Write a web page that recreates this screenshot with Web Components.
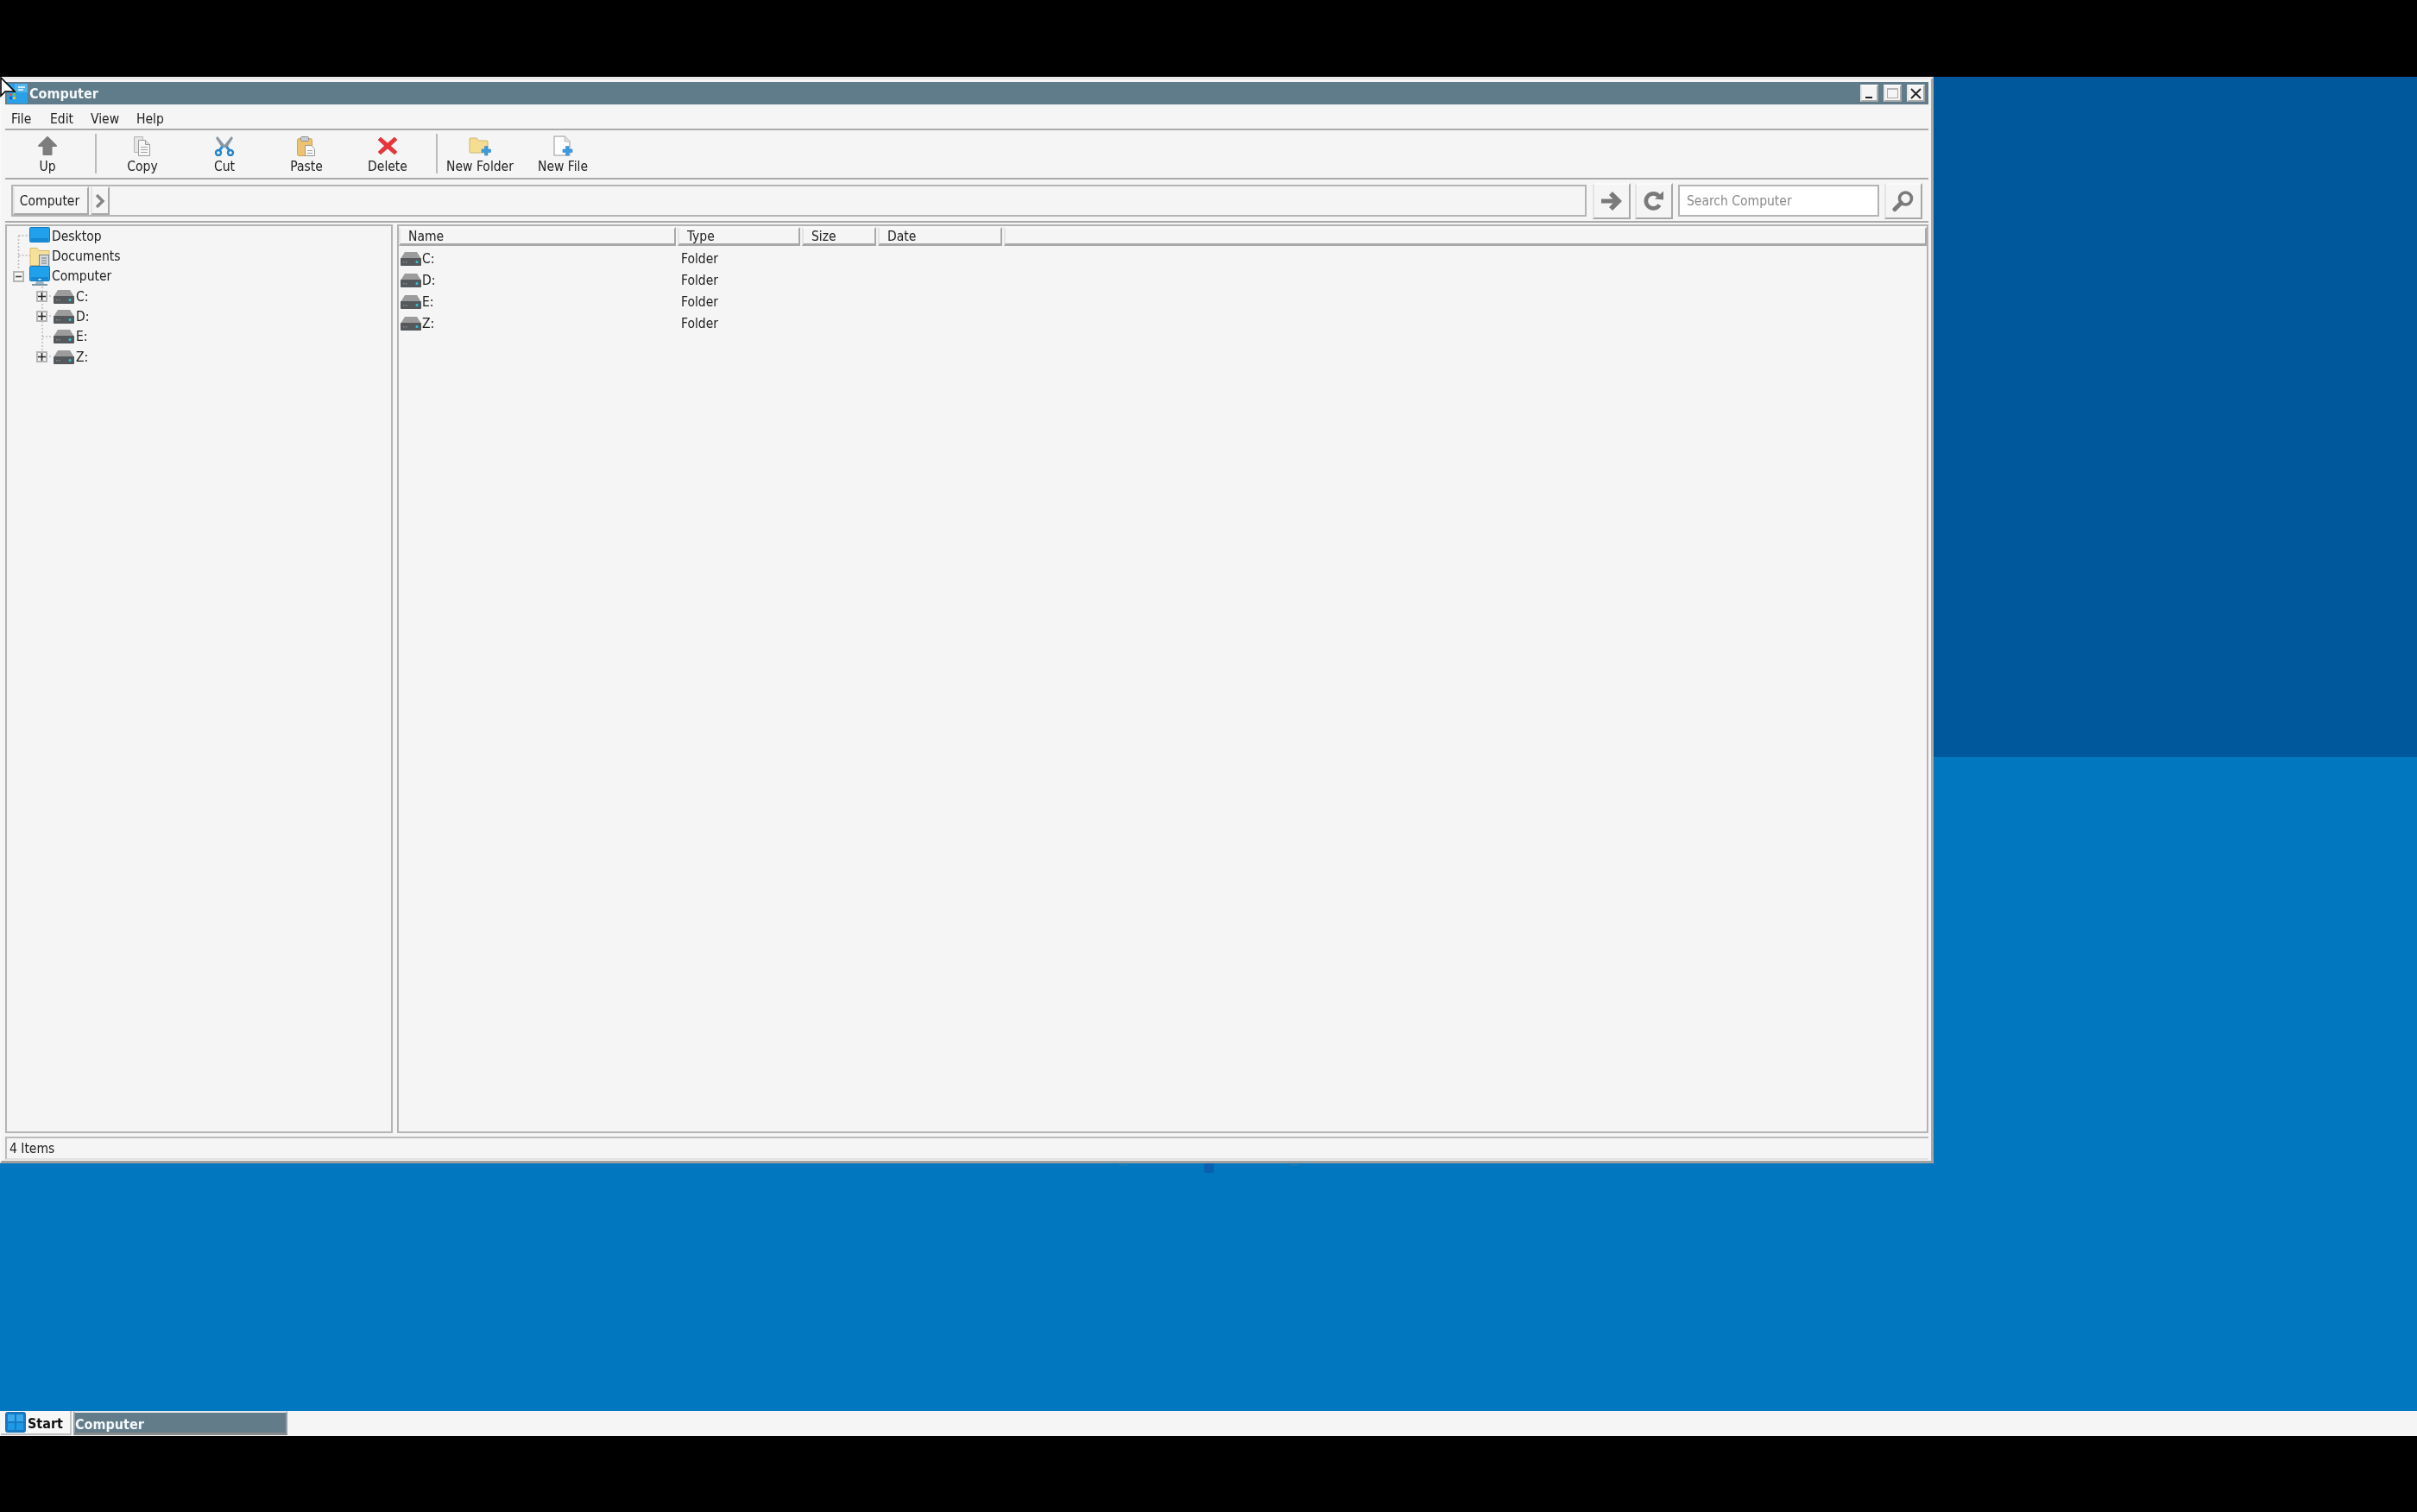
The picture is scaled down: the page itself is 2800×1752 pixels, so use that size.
<!DOCTYPE html>
<html>
<head>
<meta charset="utf-8">
<title>Computer</title>
<style>
  html, body { margin: 0; padding: 0; background: #000; }
  body { width: 2800px; height: 1752px; overflow: hidden; font-family: "DejaVu Sans", "Liberation Sans", sans-serif; font-stretch: condensed; font-size: 15.5px; color: #111; }
</style>
</head>
<body>
<x-screen>
  <x-window title="Computer">
    <x-menubar>
      <x-menu-item w="45">File</x-menu-item>
      <x-menu-item w="47">Edit</x-menu-item>
      <x-menu-item w="53">View</x-menu-item>
      <x-menu-item w="60">Help</x-menu-item>
    </x-menubar>
    <x-toolbar>
      <x-tool-button icon="up" w="98">Up</x-tool-button>
      <x-tool-sep style="margin-right:3px"></x-tool-sep>
      <x-tool-button icon="copy" w="100">Copy</x-tool-button>
      <x-tool-button icon="cut" w="90">Cut</x-tool-button>
      <x-tool-button icon="paste" w="100">Paste</x-tool-button>
      <x-tool-button icon="delete" w="88">Delete</x-tool-button>
      <x-tool-sep style="margin-left:12px"></x-tool-sep>
      <x-tool-button icon="newfolder" w="86">New Folder</x-tool-button>
      <x-tool-button icon="newfile" w="106">New File</x-tool-button>
    </x-toolbar>
    <x-addressbar path="Computer" placeholder="Search Computer"></x-addressbar>
    <x-panes>
      <x-tree slot="tree">
        <x-tree-item icon="desktop">Desktop</x-tree-item>
        <x-tree-item icon="documents">Documents</x-tree-item>
        <x-tree-item icon="computer" toggle="minus">Computer</x-tree-item>
        <x-tree-item icon="drive" depth="1" toggle="plus">C:</x-tree-item>
        <x-tree-item icon="drive" depth="1" toggle="plus">D:</x-tree-item>
        <x-tree-item icon="drive" depth="1">E:</x-tree-item>
        <x-tree-item icon="drive" depth="1" toggle="plus">Z:</x-tree-item>
      </x-tree>
      <x-file-list slot="list">
        <x-file-row name="C:" type="Folder"></x-file-row>
        <x-file-row name="D:" type="Folder"></x-file-row>
        <x-file-row name="E:" type="Folder"></x-file-row>
        <x-file-row name="Z:" type="Folder"></x-file-row>
      </x-file-list>
    </x-panes>
    <x-statusbar>4 Items</x-statusbar>
  </x-window>
  <x-taskbar slot="taskbar" task="Computer"></x-taskbar>
</x-screen>

<script>
const ICONS = {
  up: '<svg viewBox="0 0 24 24" width="24" height="24"><path d="M12 2 L22 12 L16.500 12 L16.500 22 L7.500 22 L7.500 12 L2 12 Z" fill="#7d7d7d" stroke="#7d7d7d" stroke-width="2" stroke-linejoin="round"/></svg>',
  copy: '<svg viewBox="0 0 24 24" width="24" height="24"><path d="M2.500 1.500h10l0 18h-10z" fill="#e6e6e6" stroke="#b5b5b5"/><path d="M7.500 5.500h8l5 5v13h-13z" fill="#f7f7f7" stroke="#9a9a9a"/><path d="M15.500 5.500v5h5" fill="#ddd" stroke="#9a9a9a"/><path d="M10 13.500h8M10 16.500h8M10 19.500h8" stroke="#a5a5a5"/></svg>',
  cut: '<svg viewBox="0 0 24 24" width="24" height="24"><path d="M4 1 L12 11 L20 1 L22 3 L15 14 L9 14 L2 3 Z" fill="#8a97a3"/><path d="M9.500 13 L6.500 17M14.500 13 L17.500 17" stroke="#2b8fd6" stroke-width="3"/><circle cx="5" cy="20" r="3" fill="none" stroke="#2384cc" stroke-width="2.400"/><circle cx="19" cy="20" r="3" fill="none" stroke="#2384cc" stroke-width="2.400"/></svg>',
  paste: '<svg viewBox="0 0 24 24" width="24" height="24"><rect x="1.500" y="3.500" width="17" height="20" rx="2" fill="#eec36f" stroke="#d2a24f"/><rect x="5.500" y="1.500" width="9" height="5" rx="1" fill="#c9ccd0" stroke="#8e9297"/><path d="M10.500 11.500h7l4 4v8h-11z" fill="#f8f8f8" stroke="#999"/><path d="M13 17.500h6M13 20.500h6" stroke="#a5a5a5"/></svg>',
  delete: '<svg viewBox="0 0 24 24" width="24" height="24"><path d="M4 2 L12 9 L20 2 L23 5 L15.500 12 L23 19 L20 22 L12 15 L4 22 L1 19 L8.500 12 L1 5 Z" fill="#e8343a" stroke="#c82a2f" stroke-width=".6"/></svg>',
  newfolder: '<svg viewBox="0 0 26 24" width="26" height="24"><path d="M1 4a1 1 0 0 1 1-1h7l2.500 3H21a1 1 0 0 1 1 1v12a1 1 0 0 1-1 1H2a1 1 0 0 1-1-1z" fill="#f5de91" stroke="#cdb56b"/><path d="M15 16h3.500v-3.500h3.500V16H25.500v3.500H22V23h-3.500v-3.500H15z" fill="#3b9be0" stroke="#2d86c7" stroke-width=".6"/></svg>',
  newfile: '<svg viewBox="0 0 24 24" width="24" height="24"><path d="M2 1h12l6 6v16H2z" fill="#fff" stroke="#b8b8b8" stroke-width="1.500"/><path d="M14 1v6h6" fill="#e4e4e4" stroke="#b8b8b8"/><path d="M12 16h3.500v-3.500h3.500V16h4v3.500h-4V23h-3.500v-3.500H12z" fill="#3b9be0" stroke="#2d86c7" stroke-width=".6"/></svg>',
  desktop: '<svg viewBox="0 0 24 24" width="24" height="24"><rect x=".5" y="1.500" width="23" height="17" rx="1" fill="#21a0ec" stroke="#1478bd"/><rect x="2" y="14" width="20" height="3.500" fill="#1688d3"/></svg>',
  documents: '<svg viewBox="0 0 24 24" width="24" height="24"><path d="M1 2.500h8l2 3h12v17H1z" fill="#f6e19b" stroke="#d8b96a"/><rect x="11.500" y="10.500" width="11" height="13" fill="#d5dade" stroke="#7b858d"/><path d="M14 14h6M14 17h6M14 20h6" stroke="#6e7880"/></svg>',
  computer: '<svg viewBox="0 0 24 24" width="24" height="24"><rect x=".5" y=".5" width="23" height="17" rx="1" fill="#21a0ec" stroke="#1478bd"/><rect x="2" y="13" width="20" height="3.500" fill="#1688d3"/><rect x="10.500" y="15" width="3" height="1.500" fill="#e8f4fb"/><path d="M8 18h8l1 3H7z" fill="#9eb6c4"/><rect x="3" y="21" width="18" height="2" fill="#7d97a6"/></svg>',
  drive: '<svg viewBox="0 0 24 16" width="24" height="16"><path d="M5 0h14l5 8H0z" fill="#9c9c9c"/><rect y="7" width="24" height="9" rx="1" fill="#55595c"/><rect x="3" y="11" width="1.500" height="1.500" fill="#888"/><rect x="6" y="11" width="1.500" height="1.500" fill="#888"/><circle cx="19" cy="11.500" r="1.500" fill="#2ec5d8"/></svg>',
  titleicon: '<svg viewBox="0 0 24 24" width="24" height="24"><rect x="0" y="1" width="24" height="23" fill="#2aa0e8"/><path d="M9 1h15v10H9z" fill="#4db4ee"/><path d="M13 5h8M13 8h6" stroke="#fff" stroke-width="1.500"/><rect x="3" y="12" width="3" height="3" fill="#e8503a"/><rect x="7" y="12" width="3" height="3" fill="#7ac143"/><rect x="3" y="16" width="3" height="3" fill="#1d5fbf"/><rect x="7" y="16" width="3" height="3" fill="#f4c22d"/></svg>',
  go: '<svg viewBox="0 0 26 26" width="26" height="26"><path d="M14 2 L25 13 L14 24 L10 20 L14.500 15.500 L1 15.500 L1 10.500 L14.500 10.500 L10 6 Z" fill="#7a7a7a"/></svg>',
  refresh: '<svg viewBox="0 0 26 26" width="26" height="26"><path d="M19.500 17.500 A8.500 8.500 0 1 1 18.500 7" fill="none" stroke="#7a7a7a" stroke-width="4.600"/><path d="M14 10.500 L24 11.500 L24 1.500 Z" fill="#7a7a7a"/></svg>',
  search: '<svg viewBox="0 0 26 26" width="26" height="26"><circle cx="15.500" cy="10" r="7" fill="none" stroke="#7a7a7a" stroke-width="3.600"/><path d="M10.500 15 L3 22.500" stroke="#7a7a7a" stroke-width="5" stroke-linecap="round"/></svg>',
  chevron: '<svg viewBox="0 0 12 16" width="12" height="16"><path d="M2 1 L9 8 L2 15" fill="none" stroke="#858585" stroke-width="3.400"/></svg>',
  start: '<svg viewBox="0 0 24 24" width="24" height="24"><rect x=".5" y=".5" width="23" height="23" rx="2" fill="#1878c2" stroke="#1575b8"/><rect x="3" y="3" width="8" height="8" fill="#3aa9ec"/><rect x="13" y="3" width="8" height="8" fill="#3aa9ec"/><rect x="3" y="13" width="8" height="8" fill="#1f98e4"/><rect x="13" y="13" width="8" height="8" fill="#1f98e4"/></svg>'
};

function define(tag, css, html, onConnect) {
  customElements.define(tag, class extends HTMLElement {
    connectedCallback() {
      if (this.shadowRoot) return;
      this.attachShadow({ mode: 'open' });
      const body = typeof html === 'function' ? html(this) : html;
      this.shadowRoot.innerHTML = `<style>${css}</style>${body}`;
      if (onConnect) onConnect(this);
    }
  });
}

const RAISED = 'background:#f5f5f5; border:2px solid; border-color:#fafafa #a8a8a8 #a8a8a8 #e4e4e4;';
const SUNKEN = 'border:2px solid #b4b4b4;';

define('x-screen', `
  :host { display: flex; flex-direction: column; width: 2800px; height: 1752px; background: #000; filter: blur(.45px); }
  .top { height: 89px; flex: none; }
  .desk { height: 1546px; flex: none; position: relative; background: linear-gradient(#00589c 0, #00589c 788px, #0077be 788px); }
  .dot { position: absolute; width: 11px; height: 11px; border-radius: 2px; background: #0a5fae; left: 1395px; top: 1259px; }
  .faint { position: absolute; top: 1260px; width: 10px; height: 2px; background: #3b7ba8; opacity: .45; }
  .cursor { position: absolute; left: 0; top: 0; z-index: 5; }
  .bottom { flex: 1; }
`, `
  <div class="top"></div>
  <div class="desk">
    <slot></slot>
    <div class="dot"></div>
    <div class="faint" style="left:1296px"></div>
    <div class="faint" style="left:1494px"></div>
    <svg class="cursor" width="20" height="26" viewBox="0 0 20 26"><path d="M1 1 L1 22 L6 17 L17 17 Z" fill="#fff" stroke="#000" stroke-width="1.600"/></svg>
  </div>
  <slot name="taskbar"></slot>
  <div class="bottom"></div>
`);

define('x-window', `
  :host { display: flex; flex-direction: column; width: 2240px; height: 1259px; box-sizing: border-box; background: #f5f5f5; border-top: 3px solid #e9e9e9; border-left: 2px solid #f8f8f8; border-right: 3px solid #a8a8a8; border-bottom: 3px solid #a0a0a0; padding: 3px 3px 1px 4px; }
  .title { height: 26px; flex: none; background: #607b89; color: #f4f8fa; display: flex; align-items: center; font-weight: bold; font-size: 16px; padding: 0 4px 0 2px; gap: 2px; }
  .title span { flex: 1; padding-top: 1px; }
  .btn { width: 21px; height: 20px; ${RAISED} box-sizing: border-box; margin-left: 4px; display: flex; align-items: center; justify-content: center; }
`, (el) => `
  <div class="title">
    ${ICONS.titleicon}
    <span>${el.getAttribute('title')}</span>
    <div class="btn"><svg width="15" height="15"><rect x="3" y="11" width="8" height="2" fill="#222"/></svg></div>
    <div class="btn"><svg width="15" height="15"><rect x="1.500" y="1.500" width="12" height="11" fill="none" stroke="#a9a9a9"/><rect x="1" y="1" width="13" height="2" fill="#b5b5b5"/></svg></div>
    <div class="btn"><svg width="15" height="15"><path d="M2 2 L13 13 M13 2 L2 13" stroke="#222" stroke-width="1.800"/></svg></div>
  </div>
  <slot></slot>
`);

define('x-menubar', `
  :host { display: flex; flex: none; height: 30px; box-sizing: border-box; border-bottom: 2px solid #aaa; align-items: center; padding: 6px 0 0 7px; }
`, `<slot></slot>`);

define('x-menu-item', `:host { display: block; flex: none; color: #222; }`, `<slot></slot>`, (el) => {
  el.style.width = el.getAttribute('w') + 'px';
});

define('x-toolbar', `
  :host { display: flex; flex: none; height: 57px; box-sizing: border-box; border-bottom: 2px solid #aaa; align-items: stretch; padding: 2px 0 0; }
`, `<slot></slot>`);

define('x-tool-button', `
  :host { display: flex; flex: none; flex-direction: column; align-items: center; color: #222; padding-top: 4px; box-sizing: border-box; line-height: 18px; }
  svg { display: block; margin-bottom: 3px; }
`, (el) => `${ICONS[el.getAttribute('icon')]}<slot></slot>`, (el) => {
  el.style.width = el.getAttribute('w') + 'px';
});

define('x-tool-sep', `
  :host { display: block; flex: none; width: 2px; height: 46px; margin: 2px 6px 0 6px; background: #bbb; }
`, ``);

define('x-addressbar', `
  :host { display: flex; flex: none; height: 50px; box-sizing: border-box; align-items: center; padding: 1px 7px 0 7px; border-bottom: 2px solid #aaa; }
  .crumbs { flex: 1; height: 37px; box-sizing: border-box; ${SUNKEN} display: flex; align-items: stretch; background: #f5f5f5; }
  .seg { ${RAISED} box-sizing: border-box; display: flex; align-items: center; justify-content: center; color: #222; }
  .seg.name { width: 88px; padding-right: 3px; }
  .seg.arrow { width: 22px; margin-left: 2px; }
  .btn { ${RAISED} box-sizing: border-box; width: 44px; height: 42px; display: flex; align-items: center; justify-content: center; flex: none; }
  .go { margin-left: 7px; }
  .refresh { margin-left: 5px; }
  .sb { margin-left: 6px; }
  .search { width: 233px; height: 37px; box-sizing: border-box; ${SUNKEN} background: #fff; color: #8a8a8a; display: flex; align-items: center; padding-left: 8px; flex: none; margin-left: 6px; }
`, (el) => `
  <div class="crumbs">
    <div class="seg name">${el.getAttribute('path')}</div>
    <div class="seg arrow">${ICONS.chevron}</div>
  </div>
  <div class="btn go">${ICONS.go}</div>
  <div class="btn refresh">${ICONS.refresh}</div>
  <div class="search">${el.getAttribute('placeholder')}</div>
  <div class="btn sb">${ICONS.search}</div>
`);

define('x-panes', `
  :host { display: flex; flex: 1; min-height: 0; gap: 5px; padding-top: 2px; }
  .tree { width: 449px; flex: none; ${SUNKEN} box-sizing: border-box; }
  .list { flex: 1; min-width: 0; ${SUNKEN} box-sizing: border-box; }
`, `
  <div class="tree"><slot name="tree"></slot></div>
  <div class="list"><slot name="list"></slot></div>
`);

define('x-tree', `
  :host { display: block; position: relative; height: 100%; box-sizing: border-box; }
  .lines { position: absolute; left: 0; top: 0; }
`, `
  <svg class="lines" width="100" height="170">
    <path d="M13.500 11 V50 M13.500 11 H27 M13.500 34 H27 M27 58 H33 M41 66 V151 M41 81 H53 M41 104 H53 M41 128 H53 M41 151 H53" fill="none" stroke="#bdbdbd" stroke-width="1.500" stroke-dasharray="2 2"/>
  </svg>
  <slot></slot>
`);

define('x-tree-item', `
  :host { display: flex; position: relative; height: 23.33px; align-items: center; color: #222; white-space: nowrap; }
  .toggle { width: 13px; height: 13px; box-sizing: border-box; border: 2px solid #b5b5b5; background: #f5f5f5; display: flex; flex: none; }
  .gap { flex: none; }
  svg { flex: none; }
  .label { margin-left: 2px; }
`, (el) => {
  const depth = +(el.getAttribute('depth') || 0);
  const t = el.getAttribute('toggle');
  const left = depth ? 34 : 7;
  const glyph = t === 'plus'
    ? '<svg width="9" height="9"><path d="M0 4.500H9M4.500 0V9" stroke="#222" stroke-width="1.600"/></svg>'
    : '<svg width="9" height="9"><path d="M1 4.500H8" stroke="#444" stroke-width="1.600"/></svg>';
  const icon = ICONS[el.getAttribute('icon')];
  return `
    <div class="gap" style="width:${left}px"></div>
    ${t ? `<div class="toggle">${glyph}</div>` : '<div class="gap" style="width:13px"></div>'}
    <div class="gap" style="width:${depth ? 7 : 6}px"></div>
    ${icon}
    <span class="label"><slot></slot></span>
  `;
});

define('x-file-list', `
  :host { display: block; height: 100%; }
  .head { display: flex; height: 23px; padding-top: 1px; box-sizing: border-box; }
  .col { ${RAISED} box-sizing: border-box; height: 22px; color: #222; display: flex; align-items: center; padding-left: 9px; flex: none; border-bottom-width: 3px; margin-right: 2px; }
  .col.rest { flex: 1; margin-right: 0; }
  .rows { padding-top: 2px; }
`, `
  <div class="head">
    <div class="col" style="width:321px">Name</div>
    <div class="col" style="width:142px">Type</div>
    <div class="col" style="width:86px">Size</div>
    <div class="col" style="width:144px">Date</div>
    <div class="col rest"></div>
  </div>
  <div class="rows"><slot></slot></div>
`);

define('x-file-row', `
  :host { display: flex; height: 25px; align-items: center; color: #222; padding-left: 2px; }
  .name { width: 325px; flex: none; display: flex; align-items: center; gap: 1px; }
  .type { flex: none; }
`, (el) => `
  <div class="name">${ICONS.drive}<span>${el.getAttribute('name')}</span></div>
  <div class="type">${el.getAttribute('type')}</div>
`);

define('x-statusbar', `
  :host { display: flex; flex: none; height: 27px; margin-top: 4px; box-sizing: border-box; align-items: center; border-top: 2px solid #bbb; border-left: 2px solid #bbb; border-bottom: 2px solid #e2e2e2; padding: 1px 0 0 3px; color: #222; }
`, `<slot></slot>`);

define('x-taskbar', `
  :host { display: flex; flex: none; height: 29px; background: #f5f5f5; box-sizing: border-box; }
  .start { width: 82px; height: 28px; box-sizing: border-box; margin-left: 1px; background: #f7f7f7; border-right: 2px solid #c4c4c4; border-bottom: 2px solid #bdbdbd; display: flex; align-items: center; gap: 2px; font-weight: bold; font-size: 16px; color: #111; padding-left: 5px; }
  .start span { padding-top: 2px; }
  .task { width: 248px; height: 28px; box-sizing: border-box; margin-left: 2px; background: #637c8a; color: #f4f8fa; font-weight: bold; font-size: 16px; display: flex; align-items: center; padding: 3px 0 0 0; border: 2px solid #90a0aa; border-top-color: #dfe5e9; border-bottom: 3px solid #8a8a8a; }
`, (el) => `
  <div class="start">${ICONS.start}<span>Start</span></div>
  <div class="task">${el.getAttribute('task')}</div>
`);
</script>
</body>
</html>
